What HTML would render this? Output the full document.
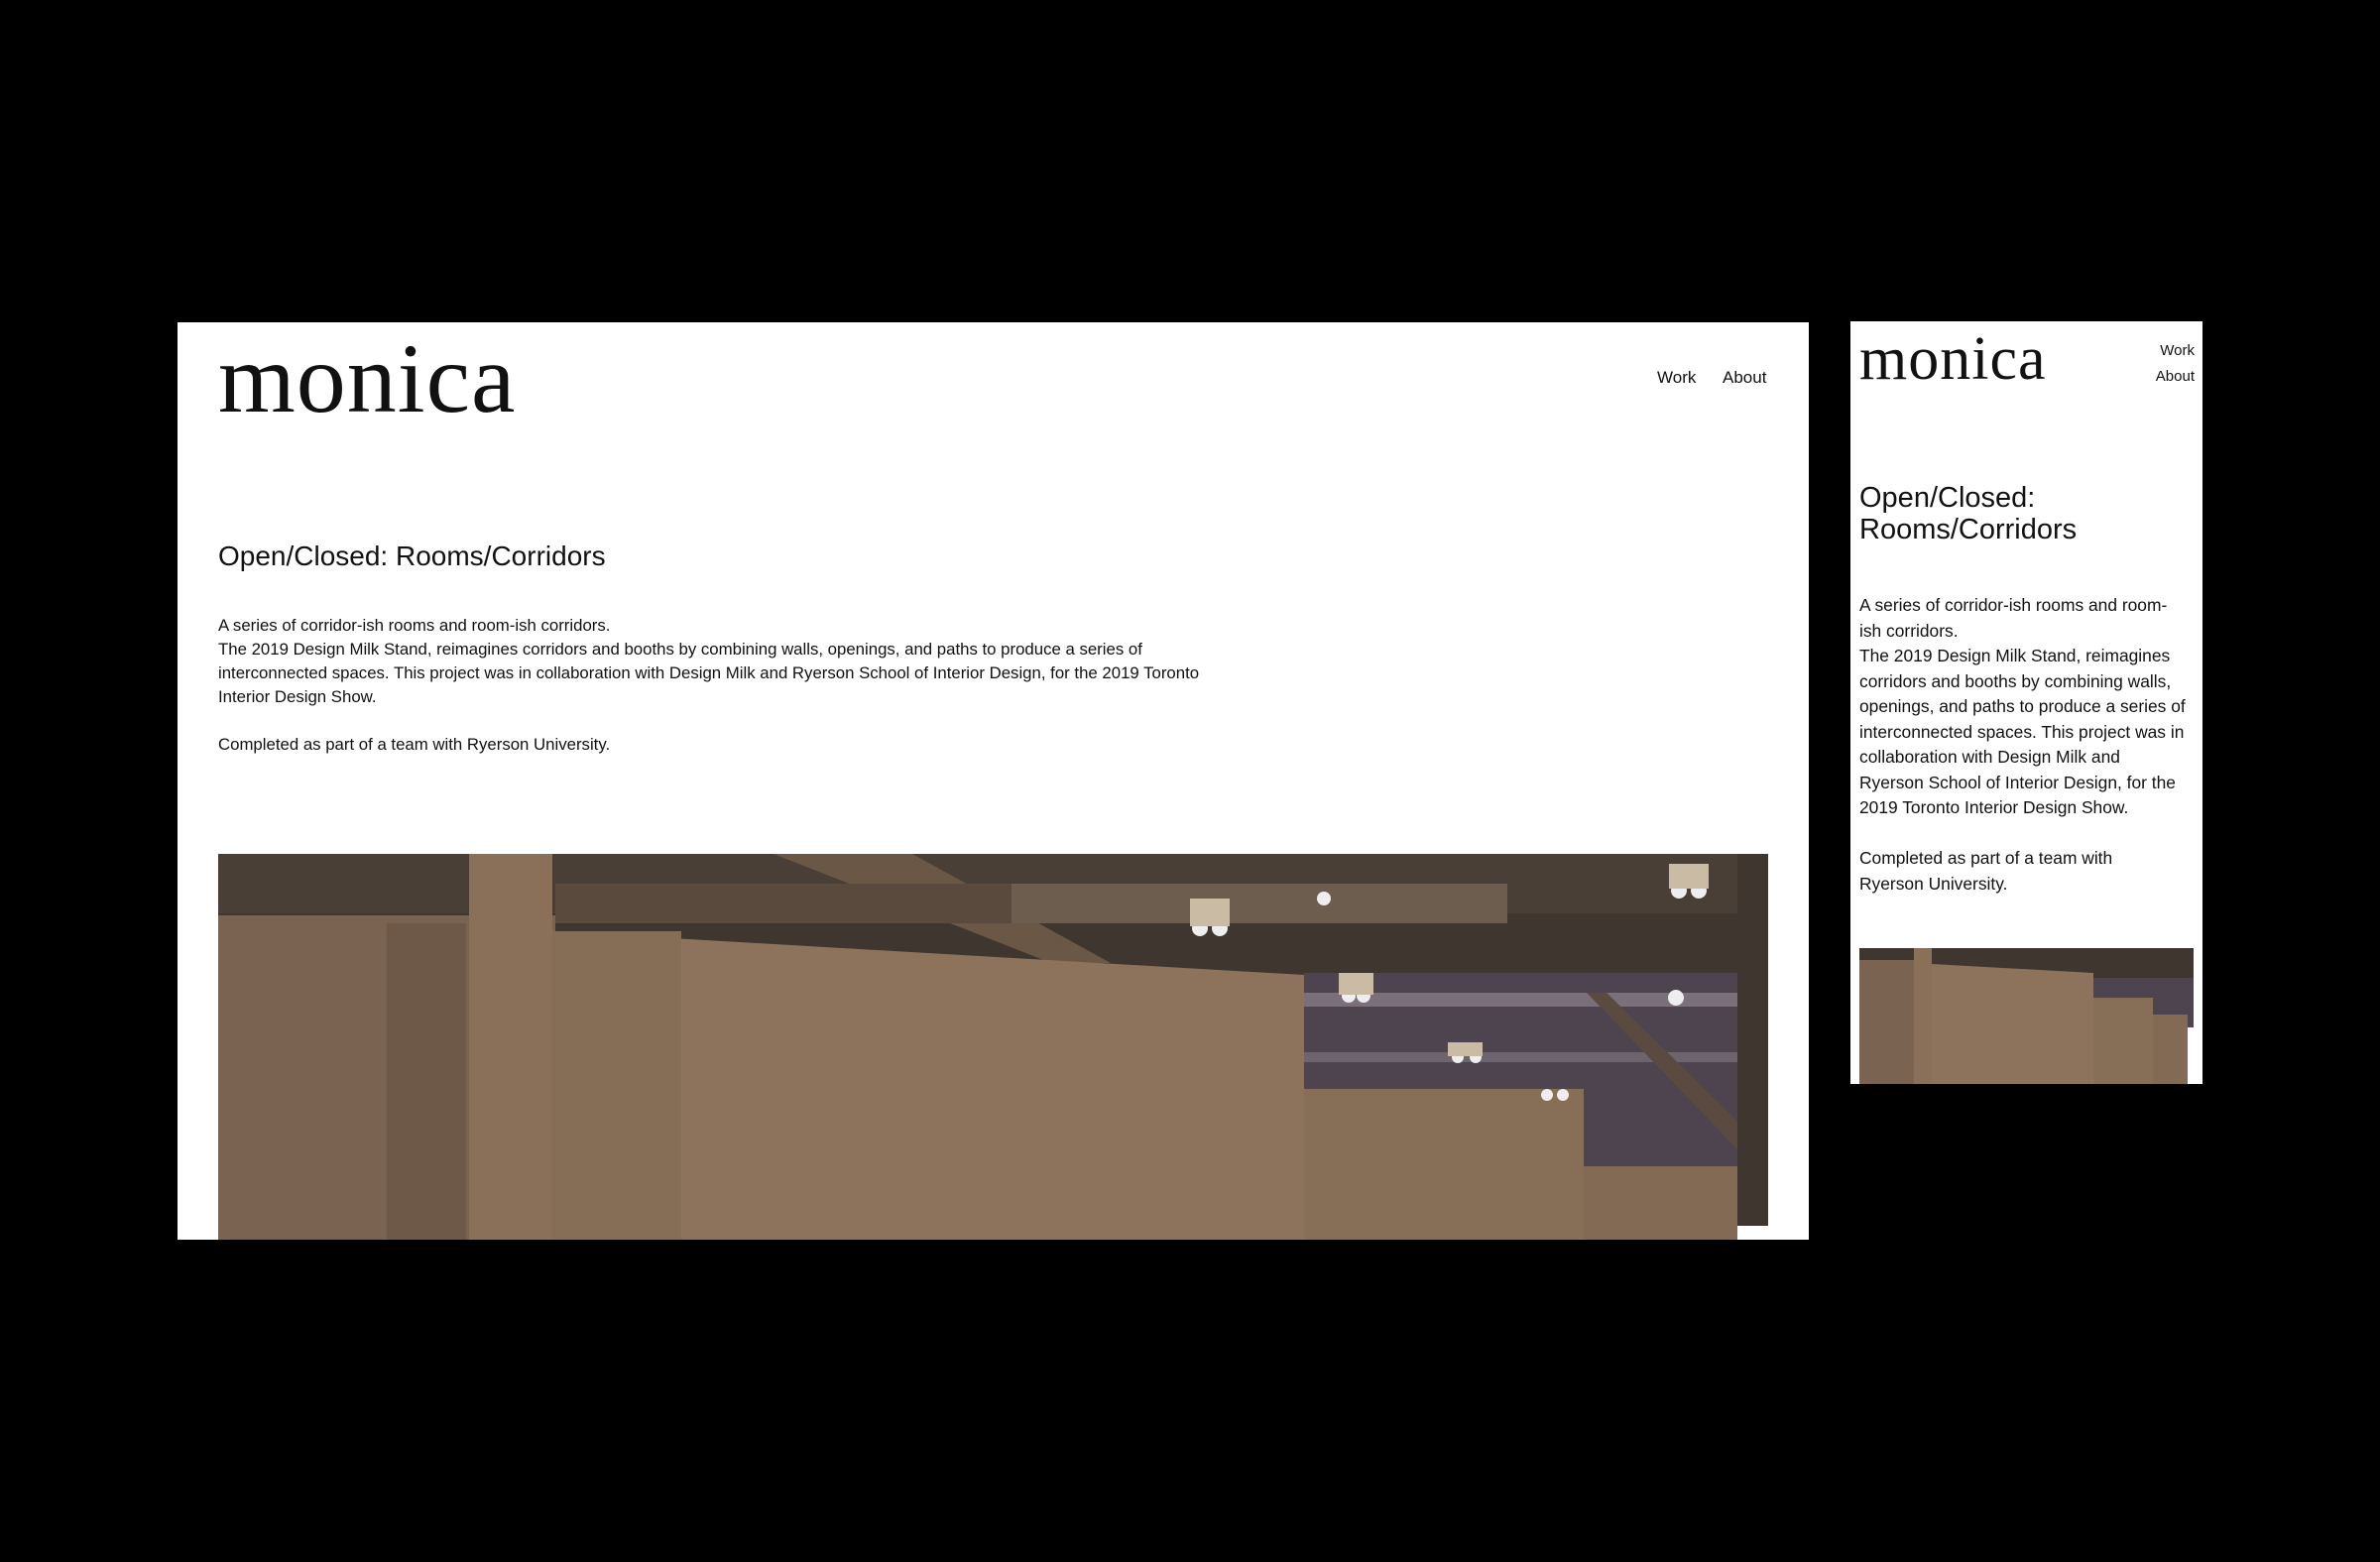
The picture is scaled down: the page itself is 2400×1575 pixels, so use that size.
<!DOCTYPE html>
<html><head><meta charset="utf-8"><style>
*{margin:0;padding:0;box-sizing:border-box}
html,body{width:2400px;height:1575px;background:#000;overflow:hidden}
.f{position:absolute;background:#fff;overflow:hidden}
.s{font-family:"Liberation Sans",sans-serif;color:#111;position:absolute;white-space:nowrap}
.logo{font-family:"Liberation Serif",serif;position:absolute;color:#111;white-space:nowrap;line-height:1.107}
</style></head><body>
<div class="f" style="left:179px;top:325px;width:1645px;height:925px">
  <div class="logo" style="left:41px;top:2px;font-size:100px;letter-spacing:1px">monica</div>
  <div class="s" style="left:1492px;top:46px;font-size:17px">Work</div>
  <div class="s" style="left:1558px;top:46px;font-size:17px">About</div>
  <div class="s" style="left:41px;top:220px;font-size:28px">Open/Closed: Rooms/Corridors</div>
  <div class="s" style="left:41px;top:294px;font-size:16.8px;line-height:24px">A series of corridor-ish rooms and room-ish corridors.<br>The 2019 Design Milk Stand, reimagines corridors and booths by combining walls, openings, and paths to produce a series of<br>interconnected spaces. This project was in collaboration with Design Milk and Ryerson School of Interior Design, for the 2019 Toronto<br>Interior Design Show.<br><br>Completed as part of a team with Ryerson University.</div>
  <svg style="position:absolute;left:41px;top:536px" width="1563" height="390" viewBox="0 0 1563 390">
    <rect width="1563" height="390" fill="#3f3630"/>
    <rect x="0" y="0" width="1563" height="60" fill="#4a3f36"/>
    <polygon points="560,0 700,0 900,110 840,110" fill="#6a5746"/>
    <rect x="340" y="30" width="560" height="40" fill="#5a4a3e"/>
    <rect x="1095" y="120" width="470" height="200" fill="#4d4450"/>
    <rect x="1095" y="140" width="470" height="14" fill="#7a6f7a"/>
    <rect x="1095" y="200" width="470" height="10" fill="#6e6470"/>
    <polygon points="1380,140 1400,140 1563,300 1563,330" fill="#5a4a40"/>
    <rect x="800" y="30" width="500" height="40" fill="#6d5d4f"/>
    <rect x="0" y="62" width="340" height="330" fill="#7a6350"/>
    <rect x="170" y="70" width="80" height="320" fill="#6e5847"/>
    <rect x="253" y="0" width="84" height="390" fill="#8a7059"/>
    <polygon points="337,78 1095,122 1095,390 337,390" fill="#8d735b"/>
    <rect x="337" y="78" width="130" height="312" fill="#866d56"/>
    <rect x="1095" y="237" width="282" height="153" fill="#876e57"/>
    <rect x="1377" y="315" width="155" height="75" fill="#826a54"/>
    <rect x="1532" y="0" width="31" height="390" fill="#3f3630"/>
    <rect x="1532" y="375" width="31" height="15" fill="#fff"/>
    <g fill="#eee"><circle cx="990" cy="75" r="8"/><circle cx="1010" cy="75" r="8"/><circle cx="1473" cy="37" r="8"/><circle cx="1493" cy="37" r="8"/><circle cx="1140" cy="143" r="7"/><circle cx="1155" cy="143" r="7"/><circle cx="1250" cy="205" r="6"/><circle cx="1268" cy="205" r="6"/><circle cx="1340" cy="243" r="6"/><circle cx="1356" cy="243" r="6"/><circle cx="1115" cy="45" r="7"/><circle cx="1470" cy="145" r="8"/></g>
    <g fill="#c9bba4"><rect x="980" y="45" width="40" height="28"/><rect x="1463" y="10" width="40" height="25"/><rect x="1130" y="120" width="35" height="22"/><rect x="1240" y="190" width="35" height="14"/></g>
  </svg>
</div>
<div class="f" style="left:1866px;top:324px;width:355px;height:769px">
  <div class="logo" style="left:9px;top:4px;font-size:62px;letter-spacing:1px">monica</div>
  <div class="s" style="right:8px;top:17px;font-size:15px;text-align:right;line-height:26px">Work<br>About</div>
  <div class="s" style="left:9px;top:162px;font-size:29px;line-height:32px">Open/Closed:<br>Rooms/Corridors</div>
  <div class="s" style="left:9px;top:274px;font-size:17.4px;line-height:25.5px">A series of corridor-ish rooms and room-<br>ish corridors.<br>The 2019 Design Milk Stand, reimagines<br>corridors and booths by combining walls,<br>openings, and paths to produce a series of<br>interconnected spaces. This project was in<br>collaboration with Design Milk and<br>Ryerson School of Interior Design, for the<br>2019 Toronto Interior Design Show.<br><br>Completed as part of a team with<br>Ryerson University.</div>
  <svg style="position:absolute;left:9px;top:632px" width="337" height="140" viewBox="0 0 337 140">
    <rect width="337" height="140" fill="#3f3630"/>
    <rect x="235" y="30" width="102" height="50" fill="#4d4450"/>
    <rect x="0" y="12" width="60" height="130" fill="#7a6350"/>
    <rect x="55" y="0" width="18" height="140" fill="#8a7059"/>
    <polygon points="73,16 236,25 236,140 73,140" fill="#8d735b"/>
    <rect x="236" y="50" width="60" height="90" fill="#876e57"/>
    <rect x="296" y="67" width="35" height="73" fill="#826a54"/>
    <rect x="331" y="80" width="6" height="60" fill="#fff"/>
  </svg>
</div>
</body></html>
